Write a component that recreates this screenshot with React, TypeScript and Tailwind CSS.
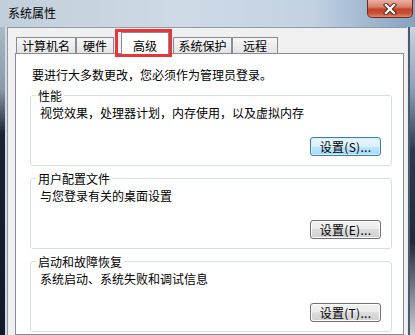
import clsx from "clsx";

type Tab = { label: string; width: string; gap?: string; active?: boolean };

const tabs: Tab[] = [
  { label: "计算机名", width: "w-[60px]", gap: "ml-[1px]" },
  { label: "硬件", width: "w-[38px]" },
  { label: "高级", width: "w-[48px]", gap: "ml-[7px]", active: true },
  { label: "系统保护", width: "w-[59px]", gap: "ml-[4px]" },
  { label: "远程", width: "w-[46px]" },
];

const groups = [
  { title: "性能", text: "视觉效果，处理器计划，内存使用，以及虚拟内存", key: "S", focused: true },
  { title: "用户配置文件", text: "与您登录有关的桌面设置", key: "E" },
  { title: "启动和故障恢复", text: "系统启动、系统失败和调试信息", key: "T" },
];

function CloseGlyph() {
  return (
    <svg viewBox="0 0 16 12" className="h-[12px] w-[16px]">
      <path d="M4 2 12 10M12 2 4 10" stroke="#4a1b12" strokeWidth={4.2} strokeLinecap="square" fill="none" />
      <path d="M4 2 12 10M12 2 4 10" stroke="#ffffff" strokeWidth={2.4} strokeLinecap="square" fill="none" />
    </svg>
  );
}

function TabButton({ tab }: { tab: Tab }) {
  if (tab.active) {
    return (
      <div className={clsx("relative z-10 h-[22px] border-x border-t border-[#898c95] bg-white pt-[5px] text-center", tab.width, tab.gap)}>
        {tab.label}
        <div className="absolute -left-[7px] -right-[4px] -top-[4px] -bottom-[3px] border-[3px] border-[#e8353a]" />
      </div>
    );
  }
  return (
    <div
      className={clsx(
        "mb-[1px] h-[16px] border-x border-t border-[#898c95] bg-[linear-gradient(#f6f6f6,#e4e4e4)] text-center",
        tab.width,
        tab.gap,
      )}
    >
      {tab.label}
    </div>
  );
}

function SettingsButton({ hotkey, focused }: { hotkey: string; focused?: boolean }) {
  return (
    <button
      className={clsx(
        "flex h-[19px] w-[71px] items-center justify-center rounded-[3px] border text-[12px] leading-[15px] tracking-[0.3px] text-black",
        focused
          ? "border-[#3c7fb1] bg-[linear-gradient(#eaf6fd_0%,#d9f0fc_50%,#bee6fd_50%,#a7d9f5_100%)] shadow-[inset_0_0_0_1px_#d5ecf9]"
          : "border-[#707070] bg-[linear-gradient(#f2f2f2_0%,#ebebeb_50%,#dddddd_50%,#cfcfcf_100%)] shadow-[inset_0_0_0_1px_#fcfcfc]",
      )}
    >
      设置({hotkey})...
    </button>
  );
}

export default function App() {
  return (
    <div className="flex h-[335px] w-[415px] flex-col overflow-hidden bg-[#c5d2df] font-['Noto_Sans_CJK_SC',sans-serif] text-[12px] leading-[15px] text-black">
      <div className="flex h-[27px] shrink-0 items-start justify-between bg-[linear-gradient(90deg,#c2ced9_0%,#cedae6_45%,#c2d2e2_75%,#86a2c2_100%)]">
        <span className="pl-[8px] pt-[5px]">系统属性</span>
        <div className="mr-[2px] flex h-[18px] w-[46px] items-center justify-center rounded-b-[5px] border border-t-0 border-[#6e2a1e] bg-[linear-gradient(#e9b0a2_0%,#d9806c_40%,#c3412a_55%,#c9543a_80%,#dc8a6c_100%)]">
          <CloseGlyph />
        </div>
      </div>

      <div className="flex min-h-0 flex-1">
        <div className="flex w-[7px] shrink-0">
          <div className="w-[5px] bg-[linear-gradient(#aab7c4_0%,#8c99a8_20%,#1b2230_35%,#141b28_100%)]" />
          <div className="w-[2px] bg-[#d4dbe2]" />
        </div>

        <div className="flex w-[400px] shrink-0 flex-col border-l border-t border-[#8d9aa7] bg-[#f0f0f0] pl-[7px] pt-[4px]">
          <div className="flex h-[22px] items-end">
            {tabs.map((tab) => (
              <TabButton key={tab.label} tab={tab} />
            ))}
          </div>

          <div className="-mt-[1px] flex w-[389px] flex-1 flex-col border border-[#898c95] bg-white pl-[14px] pt-[13px]">
            <p className="pl-[2px]">要进行大多数更改，您必须作为管理员登录。</p>

            {groups.map((g, i) => (
              <fieldset
                key={g.title}
                className={clsx(
                  "w-[362px] rounded-[3px] border border-[#d5dfe5] pb-[9px] pl-[9px] pr-[10px]",
                  i === 0 ? "mt-[6px]" : "mt-[5px]",
                )}
              >
                <legend className="-ml-[4px] px-[2px]">{g.title}</legend>
                <p className="mt-[2px]">{g.text}</p>
                <div className="mt-[17px] flex justify-end">
                  <SettingsButton hotkey={g.key} focused={g.focused} />
                </div>
              </fieldset>
            ))}
          </div>
        </div>

        <div className="flex flex-1">
          <div className="w-[1px] bg-[#e6e9ec]" />
          <div className="w-[2px] bg-[#4d5a68]" />
          <div className="flex-1 bg-[linear-gradient(#c9d5e1_0%,#8aa0b8_20%,#2b3a52_40%,#1f2a3c_70%,#c9d1d9_100%)]" />
        </div>
      </div>
    </div>
  );
}
